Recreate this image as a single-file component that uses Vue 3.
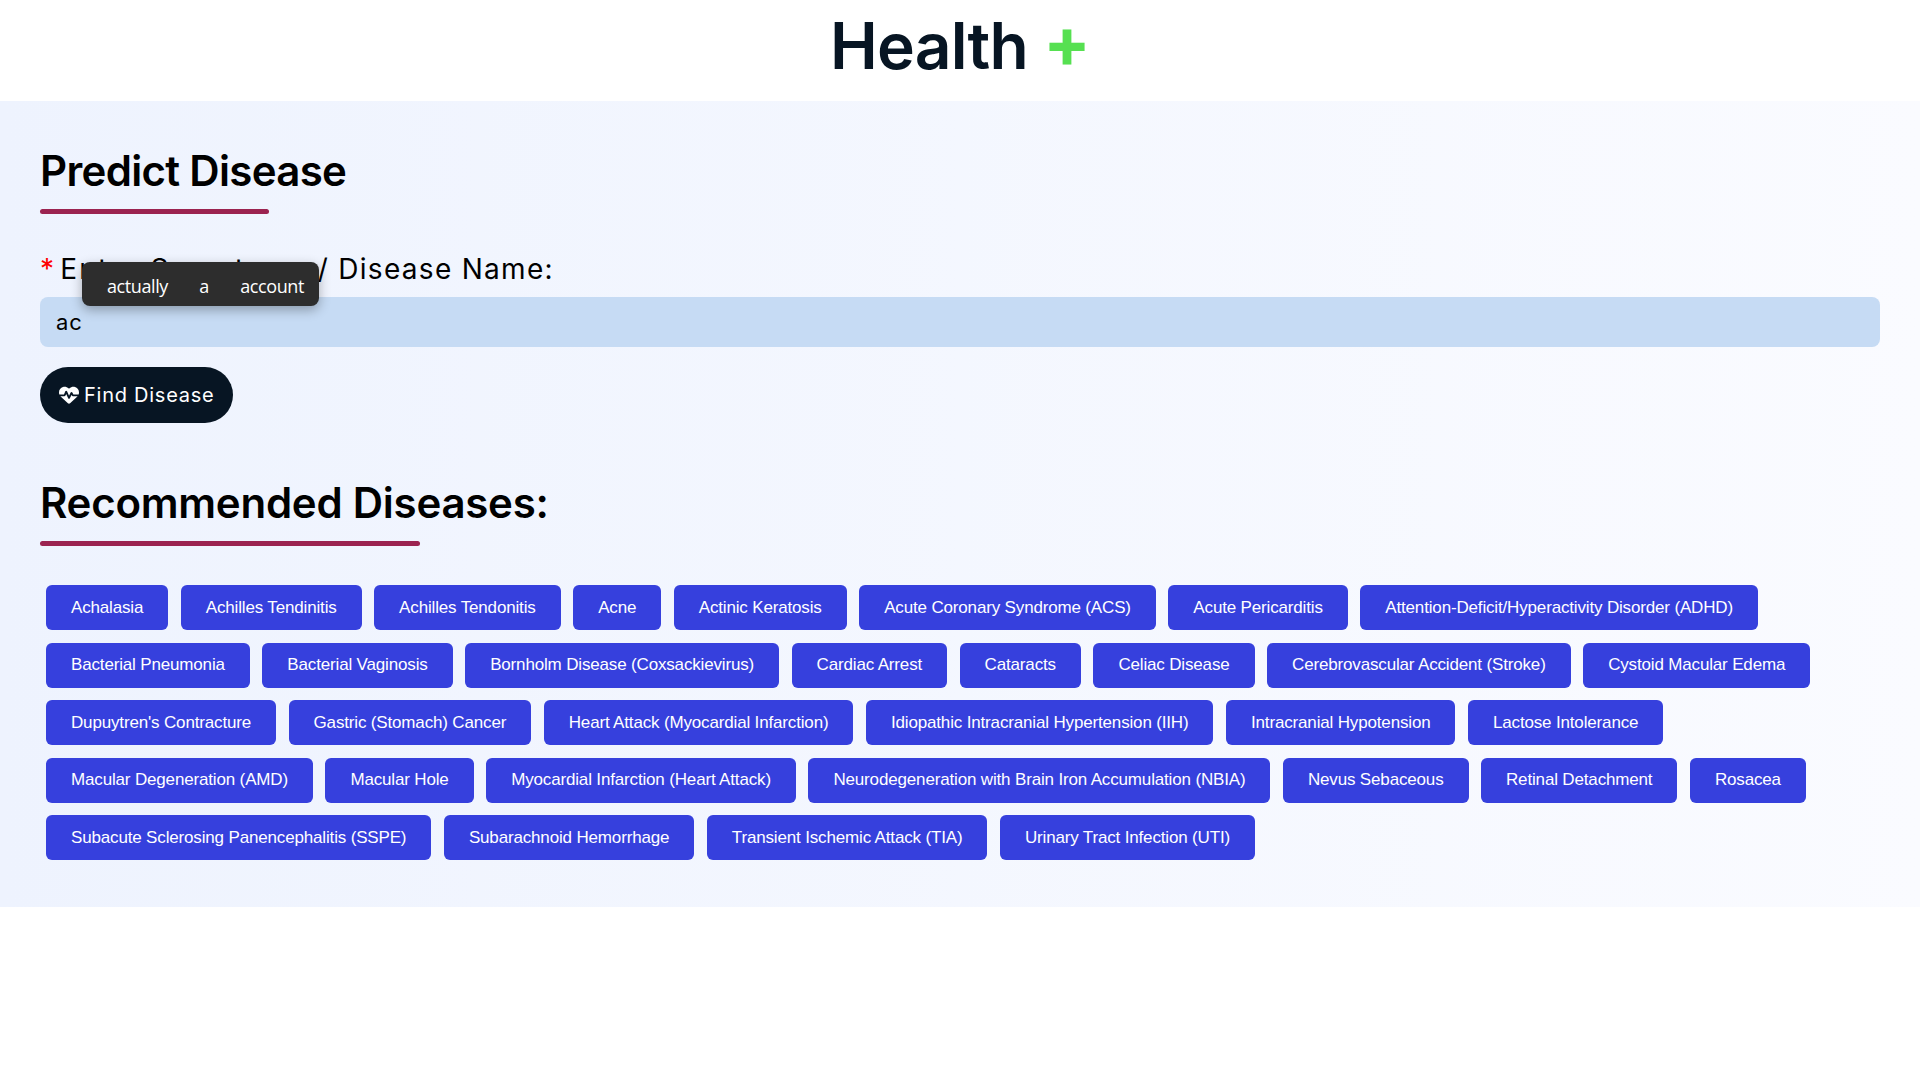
<script setup>
const chips = [
  'Achalasia','Achilles Tendinitis','Achilles Tendonitis','Acne','Actinic Keratosis','Acute Coronary Syndrome (ACS)','Acute Pericarditis','Attention-Deficit/Hyperactivity Disorder (ADHD)',
  'Bacterial Pneumonia','Bacterial Vaginosis','Bornholm Disease (Coxsackievirus)','Cardiac Arrest','Cataracts','Celiac Disease','Cerebrovascular Accident (Stroke)','Cystoid Macular Edema',
  "Dupuytren's Contracture",'Gastric (Stomach) Cancer','Heart Attack (Myocardial Infarction)','Idiopathic Intracranial Hypertension (IIH)','Intracranial Hypotension','Lactose Intolerance',
  'Macular Degeneration (AMD)','Macular Hole','Myocardial Infarction (Heart Attack)','Neurodegeneration with Brain Iron Accumulation (NBIA)','Nevus Sebaceous','Retinal Detachment','Rosacea',
  'Subacute Sclerosing Panencephalitis (SSPE)','Subarachnoid Hemorrhage','Transient Ischemic Attack (TIA)','Urinary Tract Infection (UTI)'
]
</script>

<template>
  <div class="page">
    <header class="top">
      <span class="logo">Health <span class="plus">+</span></span>
    </header>
    <main class="panel">
      <h2 class="title title-a">Predict Disease</h2>
      <div class="bar bar-a"></div>
      <div class="label"><span class="star">*</span><span class="lead">Enter Symptoms</span> / Disease Name:</div>
      <div class="field">
        <div class="input">ac</div>
        <div class="tip"><span>actually</span><span>a</span><span>account</span></div>
      </div>
      <button class="find">
        <svg class="heart" viewBox="0 0 512 512"><path fill="#fff" d="M228.3 469.1L47.6 300.4c-4.2-3.9-8.2-8.1-11.9-12.4h87c22.6 0 43-13.6 51.7-34.5l10.5-25.2 49.3 109.5c3.8 8.5 12.1 14 21.4 14.1s17.8-5 22-13.3L320 253.7l1.7 3.4c9.5 19 28.9 31 50.1 31H476.3c-3.7 4.3-7.7 8.5-11.9 12.4L283.7 469.1c-7.5 7-17.4 10.9-27.7 10.9s-20.2-3.9-27.7-10.9zM503.7 240h-132c-3 0-5.8-1.7-7.2-4.4l-23.2-46.3c-4.1-8.1-12.4-13.3-21.5-13.3s-17.4 5.1-21.5 13.3l-41.4 82.8L205.9 158.2c-3.9-8.7-12.7-14.3-22.2-14.1s-18.1 5.9-21.8 14.8l-31.8 76.3c-1.2 3-4.2 4.9-7.4 4.9H16c-2.6 0-5 .4-7.3 1.1C3 225.2 0 208.2 0 190.9v-5.8c0-69.9 50.5-129.5 119.4-141C165 36.5 211.4 51.4 244 84l12 12 12-12c32.6-32.6 79-47.5 124.6-39.9C461.5 55.6 512 115.2 512 185.1v5.8c0 16.9-2.8 33.5-8.3 49.1z"/></svg>
        Find Disease
      </button>
      <h2 class="title title-b">Recommended Diseases:</h2>
      <div class="bar bar-b"></div>
      <div class="chips">
        <span v-for="(c, i) in chips" :key="i" class="chip">{{ c }}</span>
      </div>
    </main>
  </div>
</template>

<style scoped>
.page { min-height: 1080px; background: #fff; font-family: Inter, sans-serif; }
.top { height: 101px; display: flex; justify-content: center; align-items: flex-start; }
.logo { font-size: 64px; font-weight: 600; color: #071523; line-height: 92px; letter-spacing: -0.8px; white-space: pre; }
.plus { color: #56e051; font-weight: 700; font-size: 70px; line-height: 0; vertical-align: 2px; }
.panel { height: 806px; box-sizing: border-box; padding: 44px 40px 0; background: linear-gradient(90deg, #eef3fe, #fafbff); }
.title { margin: 0; font-size: 42px; font-weight: 600; line-height: 52px; color: #000; }
.title-a { letter-spacing: -0.68px; }
.title-b { margin-top: 54px; letter-spacing: -0.25px; }
.bar { height: 5px; border-radius: 3px; background: #9b2350; margin-top: 12px; }
.bar-a { width: 229px; }
.bar-b { width: 380px; }
.label { margin-top: 37px; font-size: 28px; line-height: 36px; letter-spacing: 1.3px; color: #000; }
.star { color: #f00; margin-right: 5px; }
.lead { letter-spacing: 2.2px; }
.field { position: relative; margin-top: 10px; }
.input { height: 50px; box-sizing: border-box; padding: 0 16px; border-radius: 8px; background: #c6dbf4; font-size: 22px; line-height: 50px; letter-spacing: 1px; color: #000; }
.tip { position: absolute; left: 42px; top: -35px; height: 44px; width: 237px; box-sizing: border-box; padding: 3px 15px 0 25px; display: flex; justify-content: space-between; align-items: center; border-radius: 8px; background: #2d2d2d; color: #fff; font-family: "Open Sans", sans-serif; font-size: 18px; letter-spacing: -0.4px; box-shadow: 0 4px 12px rgba(0,0,0,.3); }
.find { display: flex; align-items: center; gap: 5px; margin-top: 20px; height: 56px; padding: 0 19px; border: 0; border-radius: 28px; background: #071523; color: #fff; font-family: Inter, sans-serif; font-size: 20px; letter-spacing: .75px; }
.heart { width: 20px; height: 20px; }
.chips { margin-top: 39px; padding-left: 6px; display: flex; flex-wrap: wrap; column-gap: 12.5px; row-gap: 12.5px; }
.chip { height: 45px; box-sizing: border-box; padding: 0 25px; display: flex; align-items: center; border-radius: 6px; background: #3640dd; color: #fff; font-family: "Liberation Sans", sans-serif; font-size: 17px; letter-spacing: -0.16px; white-space: nowrap; }
</style>
